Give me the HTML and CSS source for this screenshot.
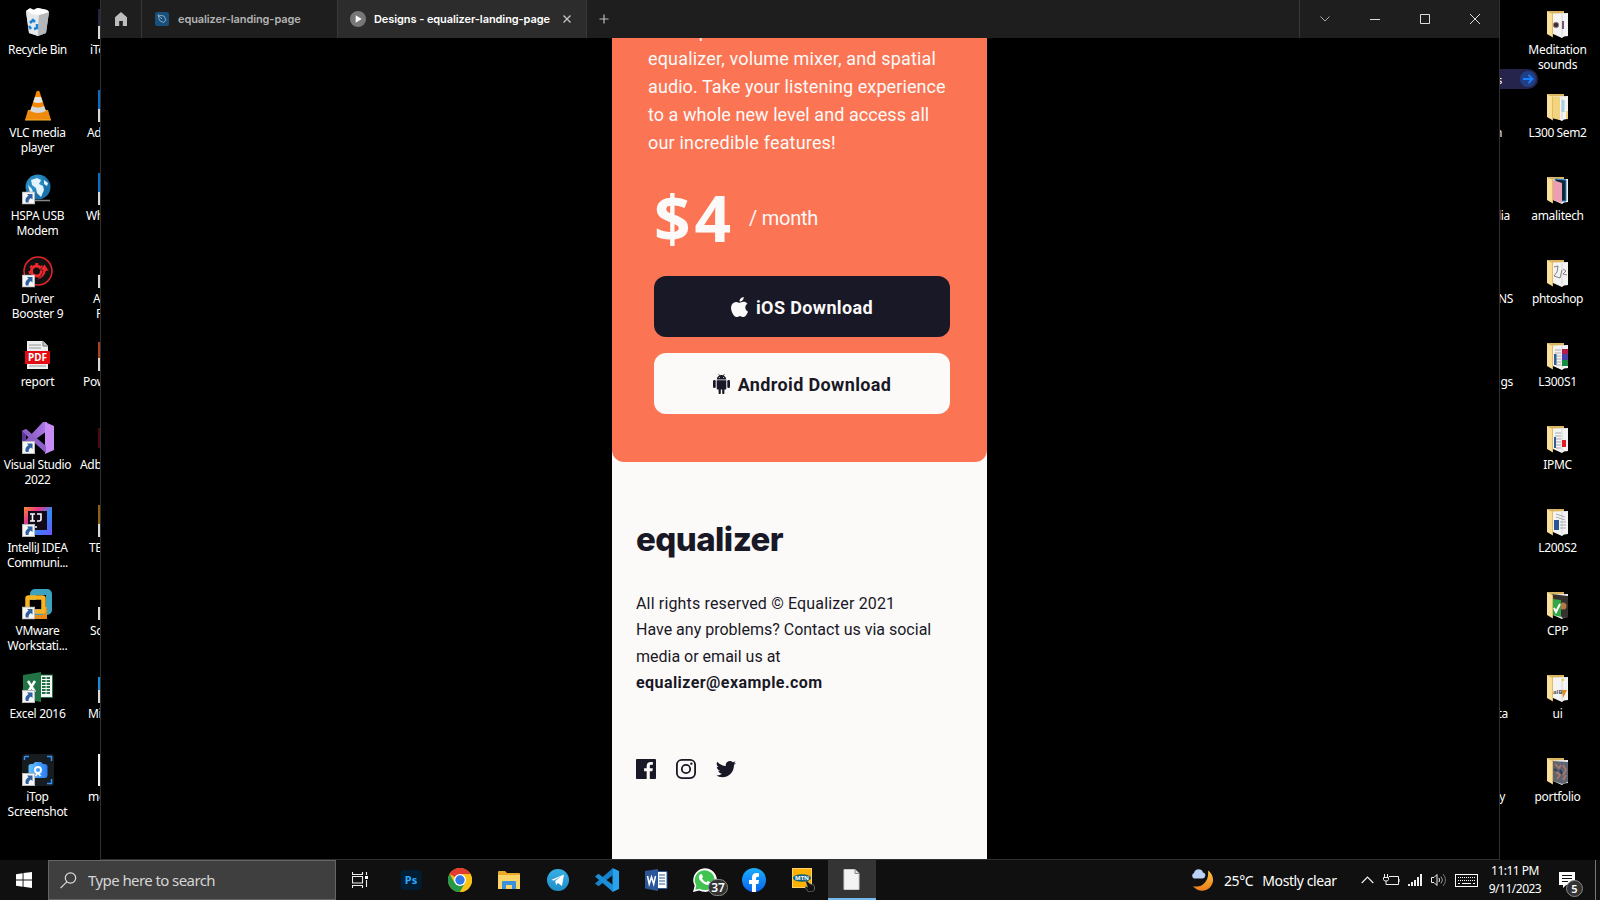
FILE: index.html
```html
<!DOCTYPE html>
<html lang="en">
<head>
<meta charset="utf-8">
<title>Desktop</title>
<link rel="stylesheet" href="styles.css">
</head>
<body>
<svg class="defs" aria-hidden="true">
  <defs>
    <symbol id="shortcut" viewBox="0 0 13 13">
      <rect width="13" height="13" fill="#b9b9b9"/><rect x="1" y="1" width="11" height="11" fill="#f6f6f6"/>
      <path d="M5 2.500h5.500V8L8.800 6.400C7 7.500 6.500 9 6.600 11H4C2.700 8 4 5.500 6.600 4.200z" fill="#2f5f9f"/>
    </symbol>
    <symbol id="folder" viewBox="0 0 21 28">
      <path d="M0 1h17v3h2v20H0z" fill="#d9b55f"/>
      <path d="M6 3.500l15-.5v23l-4 .5-2 1.500-9-4z" fill="#f4f4f4"/>
      <path d="M15 4v22" stroke="#c9c9c9" stroke-width=".7"/>
    </symbol>
    <symbol id="flap" viewBox="0 0 21 28">
      <path d="M0 1.500l6 2.500v23.500L0 24z" fill="#fbe09a"/><path d="M5.500 4v23" stroke="#e3bd66"/>
    </symbol>
    <linearGradient id="ij" x2="1" y2="1"><stop offset="0" stop-color="#ff8a2b"/><stop offset=".3" stop-color="#e8358b"/><stop offset=".55" stop-color="#2f8cf5"/><stop offset="1" stop-color="#6b57ff"/></linearGradient>
    <linearGradient id="vsl" x2="1"><stop offset="0" stop-color="#7c50bb"/><stop offset="1" stop-color="#b07be6"/></linearGradient>
    <radialGradient id="globe" cx=".35" cy=".3"><stop offset="0" stop-color="#1f7fb8"/><stop offset=".5" stop-color="#2d8fc8"/><stop offset="1" stop-color="#1972ad"/></radialGradient>
    <linearGradient id="moon" x2="0" y2="1"><stop offset="0" stop-color="#f9c440"/><stop offset="1" stop-color="#ef7d1a"/></linearGradient>
    <linearGradient id="cam" x2="1"><stop offset="0" stop-color="#63c3ff"/><stop offset="1" stop-color="#2a7cf0"/></linearGradient>
    <linearGradient id="tg" x2="0" y2="1"><stop offset="0" stop-color="#37b0e6"/><stop offset="1" stop-color="#1f8dc8"/></linearGradient>
    <linearGradient id="fb" x2="0" y2="1"><stop offset="0" stop-color="#1aaffc"/><stop offset="1" stop-color="#0863ee"/></linearGradient>
  </defs>
</svg>
<div class="desktop">
  <aside class="side">
    <div class="icons main">
      <div class="item"><svg viewBox="0 0 32 32"><path d="M4 4l3-2 4 1 4-2 5 1 5 1 2 2-3 21-8 3-9-3z" fill="#c9cccf"/><path d="M4 5l13 3-1 21-9-3z" fill="#e6e8ea"/><path d="M17 8l10-3-3 21-8 3z" fill="#b4b8bb"/><path d="M4 4l4-3 4 2 4-2 5 1 4 1 2 2-6 2-5 1-6-1z" fill="#fff"/><path d="M8 16l3-3 2 2M15 17v4l-3 1M9 22l-2-3" fill="none" stroke="#1686dc" stroke-width="2.500"/></svg><p class="tight">Recycle Bin</p></div>
      <div class="item"><svg viewBox="0 0 32 32"><path d="M6 20h20l3 10H3z" fill="#f08a0c"/><path d="M14.500 1.500q1.500-1.500 3 0l6.500 20q-8 5-16 0z" fill="#f48706"/><path d="M13 7h6l1.700 5q-4.500 2-9.400 0z" fill="#e3e5e6"/><path d="M10 16q6 3 12 0l2 5q-8 4-16 0z" fill="#d6d9da"/><path d="M3 30h26" stroke="#ffb52e"/></svg><p>VLC media<br>player</p></div>
      <div class="item"><svg viewBox="0 0 32 32"><path d="M12 27.500h16" stroke="#888" stroke-width="1.500"/><circle cx="16" cy="14" r="12.500" fill="url(#globe)"/><path d="M9 7l6-2 4 2-2 4 4 2 1 4-3 7-4-4-1-5-4-3zM22 7l4 3-1 3-3-2zM6 12l4 4 2 7-4-3z" fill="#e4f4fc"/><use href="#shortcut" y="18.500" width="13" height="13"/></svg><p>HSPA USB<br>Modem</p></div>
      <div class="item"><svg viewBox="0 0 32 32"><circle cx="16" cy="15" r="14" fill="#101010" stroke="#e3262b" stroke-width="1.500"/><circle cx="14.500" cy="15" r="5" fill="none" stroke="#f0292e" stroke-width="3"/><circle cx="14.500" cy="15" r="7" fill="none" stroke="#f0292e" stroke-width="2" stroke-dasharray="3 3.300"/><path d="M14 24q7-4 7-10h-3l4.500-6 4.500 7h-3q-1 7-10 9z" fill="#f0292e" stroke="#101010" stroke-width=".6"/><use href="#shortcut" y="18.500" width="13" height="13"/></svg><p>Driver<br>Booster 9</p></div>
      <div class="item"><svg viewBox="0 0 32 32"><path d="M5 2h16l5 5v23H5z" fill="#eee"/><path d="M21 2v5h5" fill="#ccc" stroke="#777"/><path d="M7 6h12M7 9h12M7 27h17" stroke="#999"/><rect x="3" y="12" width="25" height="13" fill="#e30b13"/><text x="15.500" y="22.300" class="pdf">PDF</text></svg><p>report</p></div>
      <div class="item"><svg viewBox="0 0 32 32"><path d="M0 9l4-2 20 18v6L4 13z" fill="#8052be"/><path d="M0 9l4-2v17l-4-3z" fill="#5d3795"/><path d="M0 22L21 0h4v9L4 24z" fill="url(#vsl)"/><path d="M23 0l9 4v24l-9 4z" fill="#c98bf4"/><path d="M0 9l4-2 20 17v7z" fill="#8d61c8"/><use href="#shortcut" y="19" width="13" height="13"/></svg><p class="tight">Visual Studio<br>2022</p></div>
      <div class="item"><svg viewBox="0 0 32 32"><rect x="2" y="2" width="28" height="28" fill="url(#ij)"/><rect x="6" y="6" width="19" height="19" fill="#120a18"/><path d="M8 9h5M10.500 9v7M8 16h5M15 9h4v5q0 2-2 2h-2M13 22h2" fill="none" stroke="#fff" stroke-width="1.600"/><use href="#shortcut" y="19" width="13" height="13"/></svg><p class="tight">IntelliJ IDEA<br>Communi...</p></div>
      <div class="item"><svg viewBox="0 0 32 32"><rect x="11" y="4" width="16" height="20" rx="2" fill="none" stroke="#3da2c0" stroke-width="6"/><path d="M10 29h13V19" stroke="#e88b19" stroke-width="4" fill="none"/><rect x="5.500" y="9.500" width="16" height="14" rx="1" fill="none" stroke="#f8b324" stroke-width="4.500"/><rect x="8" y="12" width="11" height="9" fill="#000"/><use href="#shortcut" y="18.500" width="13" height="13"/></svg><p>VMware<br>Workstati...</p></div>
      <div class="item"><svg viewBox="0 0 32 32"><rect x="17" y="4" width="13.500" height="22.500" fill="#f7f7f7" stroke="#217346"/><path d="M20 7h8M20 10h8M20 13h8M20 16h8M20 19h8M20 22h8" stroke="#217346" stroke-width="2" stroke-dasharray="3.600 1"/><path d="M1 4l18-3v30L1 28z" fill="#217346"/><path d="M6 10l7 11M13 10L6 21" stroke="#fff" stroke-width="2.500"/><use href="#shortcut" y="19" width="13" height="13"/></svg><p>Excel 2016</p></div>
      <div class="item"><svg viewBox="0 0 32 32"><rect width="32" height="32" rx="3" fill="#171c21"/><path d="M2.500 6V3.500q0-1 1-1H7M25 2.500h4.500V7M29.500 25v4.500H25" fill="none" stroke="#2f93f3" stroke-width="1.500"/><path d="M6.500 12q0-2 3-2h1.500l2-2h6l2 2h1.500q3 0 3 3v8q0 3-3 3H9.500q-3 0-3-3z" fill="url(#cam)"/><circle cx="16" cy="16" r="3" fill="none" stroke="#fff" stroke-width="1.800"/><path d="M13.500 22l2.500-3 2.500 3" stroke="#fff" stroke-width="1.500" fill="none"/><use href="#shortcut" y="19" width="13" height="13"/></svg><p>iTop<br>Screenshot</p></div>
    </div>
    <div class="icons cut">
      <div class="item"><i class="sliver navy"></i><p style="margin-left:15px">iTop</p></div>
      <div class="item"><i class="sliver blue"></i><p style="margin-left:12px">Adobe</p></div>
      <div class="item"><i class="sliver blue"></i><p style="margin-left:11px">What</p></div>
      <div class="item"><i class="sliver"></i><p style="margin-left:18px">A<br><span class="ind">F</span></p></div>
      <div class="item"><i class="sliver rust"></i><p style="margin-left:8px">Power</p></div>
      <div class="item"><i class="sliver maroon"></i><p style="margin-left:5px">Adbe</p></div>
      <div class="item"><i class="sliver gold"></i><p style="margin-left:14px">TEK</p></div>
      <div class="item"><i class="sliver"></i><p style="margin-left:15px">Scr</p></div>
      <div class="item"><i class="sliver azure"></i><p style="margin-left:13px">Mi</p></div>
      <div class="item"><i class="sliver white"></i><p style="margin-left:13px">me</p></div>
    </div>
  </aside>

  <main class="window">
    <header class="titlebar">
      <div class="home"><svg width="12" height="14" viewBox="0 0 12 14"><path d="M6 0l6 5.200V14H7.800V9H4.200v5H0V5.200z" fill="#bdbdbd"/></svg></div>
      <div class="tab first"><svg width="14" height="14" viewBox="0 0 14 14"><rect width="14" height="14" rx="2" fill="#17507c"/><path d="M3 3l6 1 2 4-2.500 2.500-4-2zM3 3l4 4M8 11l3-3" fill="none" stroke="#89a6bb"/></svg><span>equalizer-landing-page</span></div>
      <div class="tab active"><svg width="16" height="16" viewBox="0 0 16 16"><circle cx="8" cy="8" r="8" fill="#777"/><path d="M5.700 4.200l6 3.800-6 3.800z" fill="#fff"/></svg><span>Designs - equalizer-landing-page</span><svg class="x" width="8" height="8" viewBox="0 0 8 8"><path d="M.5.5l7 7M7.500.5l-7 7" stroke="#c6c6c6" stroke-width="1.300"/></svg></div>
      <div class="plus"><svg width="10" height="10" viewBox="0 0 10 10"><path d="M5 .5v9M.5 5h9" stroke="#bbb" stroke-width="1.200"/></svg></div>
      <div class="controls">
        <svg viewBox="0 0 50 38"><path d="M20.500 16.500l4.500 4.500 4.500-4.500" fill="none" stroke="#aaa"/></svg>
        <svg viewBox="0 0 50 38"><path d="M20 19.500h10" stroke="#ddd"/></svg>
        <svg viewBox="0 0 50 38"><path d="M20.500 14.500h9v9h-9z" fill="none" stroke="#ddd"/></svg>
        <svg viewBox="0 0 50 38"><path d="M20 14l10 10M30 14L20 24" stroke="#ddd"/></svg>
      </div>
    </header>
    <div class="phone">
      <section class="card">
        <p class="pitch"><span>Get expert</span><span class="a">equalizer, volume mixer, and spatial</span><span class="b">audio. Take your listening experience</span><span class="c">to a whole new level and access all</span><span class="d">our incredible features!</span></p>
        <div class="price"><strong>$4</strong><span>/ month</span></div>
        <div class="btn dark"><svg width="17" height="20" viewBox="2.200 0 19.500 24" preserveAspectRatio="none"><path fill="#fcfaf9" d="M12.152 6.896c-.948 0-2.415-1.078-3.960-1.040-2.040.027-3.910 1.183-4.961 3.014-2.117 3.675-.546 9.103 1.519 12.090 1.013 1.454 2.208 3.090 3.792 3.039 1.520-.065 2.090-.987 3.935-.987 1.831 0 2.350.987 3.960.948 1.637-.026 2.676-1.480 3.676-2.948 1.156-1.688 1.636-3.325 1.662-3.415-.039-.013-3.182-1.221-3.220-4.857-.026-3.040 2.480-4.494 2.597-4.559-1.429-2.090-3.623-2.324-4.390-2.376-2-.156-3.675 1.090-4.610 1.090zM15.530 3.830c.843-1.012 1.400-2.427 1.245-3.830-1.207.052-2.662.805-3.532 1.818-.780.896-1.454 2.338-1.273 3.714 1.338.104 2.715-.688 3.559-1.701"/></svg><span>iOS Download</span></div>
        <div class="btn light"><svg width="17" height="20" viewBox="0 0 17 20"><g fill="#191826"><path d="M3.700 5.500Q4 2.300 6.300 1.500L5.300.200l.5-.3 1 1.400q1.700-.5 3.400 0l1-1.400.5.300-1 1.300q2.300.8 2.600 4zM3.700 6.300h9.600v8.200q0 1-1 1h-.9V19a1 1 0 0 1-2.200 0v-3.500H7.800V19a1 1 0 0 1-2.200 0v-3.500h-.9q-1 0-1-1z"/><rect y="6" width="2.700" height="8" rx="1.200"/><rect x="14.300" y="6" width="2.700" height="8" rx="1.200"/></g><circle cx="6.300" cy="3.500" r=".5" fill="#fff"/><circle cx="10.700" cy="3.500" r=".5" fill="#fff"/></svg><span>Android Download</span></div>
      </section>
      <footer class="foot">
        <div class="brand">equalizer</div>
        <p class="legal"><span class="e">All rights reserved © Equalizer 2021</span><span>Have any problems? Contact us via social</span><span>media or email us at</span><b>equalizer@example.com</b></p>
        <div class="social">
          <svg viewBox="0 0 20 20"><path fill="#191826" d="M18.896 0H1.104C.494 0 0 .494 0 1.104v17.793C0 19.506.494 20 1.104 20h9.580v-7.745H8.076V9.237h2.606V7.010c0-2.583 1.578-3.990 3.883-3.990 1.104 0 2.052.082 2.329.119v2.700h-1.598c-1.254 0-1.496.597-1.496 1.470v1.928h2.989l-.390 3.018h-2.600V20h5.098c.608 0 1.102-.494 1.102-1.104V1.104C20 .494 19.506 0 18.896 0z"/></svg>
          <svg viewBox="0 0 20 20"><rect x=".9" y=".9" width="18.200" height="18.200" rx="5" fill="none" stroke="#191826" stroke-width="1.800"/><circle cx="10" cy="10" r="4.200" fill="none" stroke="#191826" stroke-width="1.800"/><circle cx="15.340" cy="4.660" r="1.200" fill="#191826"/></svg>
          <svg viewBox="0 -1.700 20 20"><path fill="#191826" d="M20 2.172a8.192 8.192 0 01-2.357.646 4.110 4.110 0 001.805-2.270 8.220 8.220 0 01-2.606.996A4.096 4.096 0 0013.847.248c-2.650 0-4.596 2.472-3.998 5.037A11.648 11.648 0 011.392 1a4.109 4.109 0 001.270 5.478 4.086 4.086 0 01-1.858-.513c-.045 1.900 1.318 3.679 3.291 4.075a4.113 4.113 0 01-1.853.070 4.106 4.106 0 003.833 2.849A8.250 8.250 0 010 14.658a11.616 11.616 0 006.290 1.843c7.618 0 11.922-6.434 11.662-12.205A8.354 8.354 0 0020 2.172z"/></svg>
        </div>
      </footer>
    </div>
  </main>

  <aside class="side right">
    <div class="icons tails">
      <div class="item"><div class="pill"><span>s</span><svg width="16" height="16" viewBox="0 0 16 16"><circle cx="8" cy="8" r="8" fill="#213f86"/><path d="M3 8h9M8.500 4L12.500 8l-4 4" fill="none" stroke="#1b80ff" stroke-width="1.800"/></svg></div></div>
      <div class="item"><p style="width:2px">n</p></div>
      <div class="item"><p style="width:10px">lia</p></div>
      <div class="item"><p style="width:13px">NS</p></div>
      <div class="item"><p style="width:13px">gs</p></div>
      <div class="item"></div><div class="item"></div><div class="item"></div>
      <div class="item"><p style="width:8px">ta</p></div>
      <div class="item"><p style="width:5px">y</p></div>
    </div>
    <div class="icons folders">
      <div class="item"><svg viewBox="0 0 21 28"><use href="#folder"/><circle cx="9" cy="15" r="2.700" fill="#333" stroke="#a57a8c"/><path d="M16 11v8" stroke="#74556d" stroke-width="2"/><use href="#flap"/></svg><p>Meditation<br>sounds</p></div>
      <div class="item"><svg viewBox="0 0 21 28"><use href="#folder"/><path d="M3 3l10 1v23l-9-2zM19 18h2v8h-2z" fill="#f2d37e"/><path d="M16 7v12" stroke="#a9cfe2" stroke-width="3"/><use href="#flap"/></svg><p class="tight">L300 Sem2</p></div>
      <div class="item"><svg viewBox="0 0 21 28"><use href="#folder"/><path d="M8 3l11 1v21h-5z" fill="#10263c" stroke="#2f84c7"/><path d="M6 4l9 3v20l-9-3z" fill="#eaa0b2"/><use href="#flap"/></svg><p>amalitech</p></div>
      <div class="item"><svg viewBox="0 0 21 28"><use href="#folder"/><path d="M7 8l4-1-1 6-3 4 6 2 2-8M16 10l3 2-3 3 4 1" fill="none" stroke="#666" stroke-width=".8"/><use href="#flap"/></svg><p class="tight">phtoshop</p></div>
      <div class="item"><svg viewBox="0 0 21 28"><use href="#folder"/><path d="M8 8h6M8 11h6M8 14h6M8 17h6M9 20h5M9 23h5" stroke="#aaa"/><path d="M7 12h2.500v11H7z" fill="#315d9c"/><path d="M15 7h6v5h-6z" fill="#b51d48"/><path d="M15 12h6v6h-6z" fill="#4942a8"/><path d="M15 18h6v6h-6z" fill="#148b44"/><use href="#flap"/></svg><p>L300S1</p></div>
      <div class="item"><svg viewBox="0 0 21 28"><use href="#folder"/><path d="M8 8h6M8 11h6M8 14h6M8 17h6M9 20h5M9 23h5" stroke="#aaa"/><path d="M7 12h2v11H7z" fill="#315d9c"/><path d="M15 15h4v7h-4z" fill="#e01c2b"/><use href="#flap"/></svg><p>IPMC</p></div>
      <div class="item"><svg viewBox="0 0 21 28"><use href="#folder"/><path d="M9 6l9 3M9 9l9 3M13 14h6M13 17h6M13 20h6" stroke="#aaa"/><path d="M7 12h5v10H7z" fill="#2b579a"/><use href="#flap"/></svg><p>L200S2</p></div>
      <div class="item"><svg viewBox="0 0 21 28"><use href="#folder"/><path d="M4 3l17 2v21l-6 1z" fill="#35312f"/><circle cx="16" cy="15" r="3.500" fill="#b9783f"/><path d="M6 8l8 1v17l-8-2z" fill="#2fa84a"/><path d="M7 17l2 4 4-8" fill="none" stroke="#fff" stroke-width="2"/><use href="#flap"/></svg><p>CPP</p></div>
      <div class="item"><svg viewBox="0 0 21 28"><use href="#folder"/><path d="M15 16h5l-4 8z" fill="#e68a22"/><path d="M15 6h2" stroke="#f6c933" stroke-width="2"/><text x="6" y="20" class="alb">alB</text><use href="#flap"/></svg><p>ui</p></div>
      <div class="item"><svg viewBox="0 0 21 28"><use href="#folder"/><path d="M6 4l15 1v20l-6 2-9-3z" fill="#5f6472"/><path d="M8 7l4 4 2-3M16 8l3 5-3 5M9 15l4 3-3 4M19 18l-3 5" fill="none" stroke="#b07a67" stroke-width="1.600"/><path d="M7 12l3 2M13 13l2 4" stroke="#2c3c5e" stroke-width="2"/><use href="#flap"/></svg><p>portfolio</p></div>
    </div>
  </aside>
</div>

<nav class="taskbar">
  <div class="start"><svg width="16" height="16" viewBox="0 0 16 16"><path d="M0 2.200L6.600 1.300V7.500H0zM7.500 1.100L16 0v7.500H7.500zM0 8.400h6.600v6.300L0 13.800zM7.500 8.400H16V16l-8.500-1.200z" fill="#fff"/></svg></div>
  <div class="search"><svg width="17" height="17" viewBox="0 0 17 17"><circle cx="10.500" cy="6" r="5.200" fill="none" stroke="#ddd" stroke-width="1.200"/><path d="M6.800 9.800L.5 16.200" stroke="#ddd" stroke-width="1.200"/></svg><span>Type here to search</span></div>
  <div class="view"><svg width="16" height="16" viewBox="0 0 16 16"><path d="M.5 0v2.500h10V0M.5 16v-2.500h10V16M.5 4.500h10v6.500H.5zM14.500 0v3M14.500 8v7" fill="none" stroke="#eee" stroke-width="1.100"/><path d="M13 4h3v3h-3z" fill="#fff"/></svg></div>
  <div class="apps">
    <div><svg viewBox="0 0 24 24"><rect x="1.500" y="2" width="21" height="20" rx="3.500" fill="#001d34"/><text x="12" y="15.700" class="ps">Ps</text></svg></div>
    <div><svg viewBox="0 0 24 24"><circle cx="12" cy="12" r="12" fill="#fbc116"/><path d="M12 12L1.600 6A12 12 0 0 1 22.400 6H12z" fill="#e33b2e"/><path d="M1.600 6A12 12 0 0 0 12 24l5.200-9L12 12 6.800 15z" fill="#279847"/><path d="M12 6h10.400A12 12 0 0 1 12 24l5.200-9z" fill="#fbc116"/><circle cx="12" cy="12" r="6" fill="#fff"/><circle cx="12" cy="12" r="4.700" fill="#3079e8"/></svg></div>
    <div><svg viewBox="0 0 24 24"><path d="M1 4q0-1 1-1h6l2 2h12q1 0 1 1v15H1z" fill="#e9aa2a"/><path d="M1 7h22v14H1z" fill="#fbd567"/><path d="M5 21v-7q0-1 1-1h12q1 0 1 1v7h-4v-4H9v4z" fill="#3a92dc"/></svg></div>
    <div><svg viewBox="0 0 24 24"><circle cx="12" cy="12" r="11" fill="url(#tg)"/><path d="M5 12l13-5.500-2 11.500-4-3-2 2-.8-4 5.800-4.500-7 4z" fill="#fff"/></svg></div>
    <div><svg viewBox="0 0 24 24"><path d="M17.500 0L24 3v18l-6.500 3z" fill="#2aa3ee"/><path d="M18 0v7L3.500 18.200 0 15.500z" fill="#1682cb"/><path d="M18 24v-7L3.500 5.800 0 8.500z" fill="#1b8ed8"/></svg></div>
    <div><svg viewBox="0 0 24 24"><path d="M13 3.500h10v17H13z" fill="#fff" stroke="#2b579a"/><path d="M15 7h6M15 10h6M15 13h6M15 16h6" stroke="#2b579a" stroke-width="1.200"/><path d="M1 3l13-2v22L1 20.500z" fill="#2b579a"/><path d="M3.500 8l1.700 8L7.500 9l2.200 7 1.800-8" fill="none" stroke="#fff" stroke-width="1.500"/></svg></div>
    <div class="wa"><svg viewBox="0 0 24 24"><path d="M0 24l1.700-6.200A11.800 11.800 0 1 1 6.300 22.400z" fill="#fff"/><path d="M2.300 21.700l1-4.200a9.900 9.900 0 1 1 3.300 3.200z" fill="#40c351"/><path d="M7 6.500q1-1 2 0l1 2.500-1 1.500q1.500 2.800 4.300 4l1.500-1.500 2.700 1.300q.5 1-1 2.300-2 1.200-5.500-.8-4.500-2.800-5.200-6-.2-2 1.200-3.300z" fill="#fff"/></svg><b>37</b></div>
    <div><svg viewBox="0 0 24 24"><circle cx="12" cy="12" r="12" fill="url(#fb)"/><path d="M10 24v-8H7v-4h3V9.500Q10 5 14.500 5q1.500 0 2.500.3v3.400h-1.500Q14 8.700 14 10.200V12h3l-.6 4H14v8z" fill="#fff"/></svg></div>
    <div><svg viewBox="0 0 24 24"><rect x="1.500" y=".5" width="19" height="19" fill="#ffb100" stroke="#ffd06b"/><ellipse cx="11" cy="10" rx="9" ry="3.800" fill="#11627c"/><text x="11" y="12" class="mtn">MTN</text><path d="M14.500 13q1-.8 2 .3l2 2.200 4 1.300q1.500 1.500 1 5l-2 2h-4l-3.500-4.500q.5-1.300 2-.5l.5.300z" fill="#111" stroke="#999" stroke-width=".6"/></svg></div>
    <div class="on"><svg viewBox="0 0 24 24"><path d="M4 2.500h11l4 4v16H4z" fill="#f3f3f3" stroke="#ccc"/><path d="M15 2.500v4h4" fill="#ddd" stroke="#888"/></svg></div>
  </div>
  <div class="weather"><svg width="24" height="23" viewBox="0 0 24 23"><path d="M17 1.500a11 11 0 1 1-15 15.500q7 2 11.500-3T17 1.500z" fill="url(#moon)"/><path d="M3 9.500a3 3 0 0 1 0-5.500Q4 .300 7.500.300t4.500 3.200q3 1 2.200 3.500-.5 2.500-3 2.500z" fill="#b9d2f6"/></svg><span class="deg">25°C</span><span>Mostly clear</span></div>
  <div class="tray">
    <svg width="13" height="8" viewBox="0 0 13 8"><path d="M.7 7l5.800-5.800L12.300 7" fill="none" stroke="#eee" stroke-width="1.200"/></svg>
    <svg width="17" height="12" viewBox="0 0 17 12"><path d="M6 2.500h9.500v8H6M17 5v3M1.500 0v3M4.500 0v3M.5 3.500h5v2q0 1.500-2.500 1.500T.500 5.500zM3 7v3.500h3" fill="none" stroke="#eee"/></svg>
    <svg width="14" height="12" viewBox="0 0 14 12"><path d="M1 12v-2M4 12V8M7 12V6M10 12V3M13 12V0" stroke="#eee" stroke-width="2"/></svg>
    <svg width="17" height="14" viewBox="0 0 17 14"><path d="M.5 4.500h2.500l3-3v11l-3-3H.500zM8 5q1 2 0 4" fill="none" stroke="#eee"/><path d="M10 3.500q3 3.500 0 7" fill="none" stroke="#999"/><path d="M12 1q5 6 0 12" fill="none" stroke="#777"/></svg>
    <svg width="23" height="13" viewBox="0 0 23 13"><rect x=".5" y=".5" width="22" height="12" fill="none" stroke="#fff"/><path d="M3 3.500h17M3 6.500h17" stroke="#fff" stroke-dasharray="1 1"/><path d="M3 9.500h2M7 9.500h9M18 9.500h2" stroke="#fff"/></svg>
  </div>
  <div class="clock"><span>11:11 PM</span><span>9/11/2023</span></div>
  <div class="note"><svg width="16" height="16" viewBox="0 0 16 16"><path d="M0 0h16v13H7l-3 3v-3H0z" fill="#fff"/><path d="M3 3.500h10M3 6.500h10M3 9.500h6" stroke="#111"/></svg><b>5</b></div>
</nav>
</body>
</html>
```
FILE: styles.css
```css
* { box-sizing: border-box; }
body { margin: 0; width: 1600px; height: 900px; overflow: hidden; background: #000; color: #fff; font-family: "Noto Sans", "Open Sans", sans-serif; display: grid; grid-template-rows: 860px 40px; }
.defs { position: absolute; width: 0; height: 0; }
p { margin: 0; }
svg { display: block; flex: none; }

.desktop { display: grid; grid-template-columns: 100px 1400px 100px; height: 860px; }
.side { display: grid; grid-template-columns: 75px 25px; overflow: hidden; height: 860px; }
.side.right { grid-template-columns: 20px 75px; }
.icons { display: grid; grid-auto-rows: 83px; align-content: start; }
.item { padding-top: 7px; display: flex; flex-direction: column; align-items: center; min-width: 0; }
.item > svg { width: 32px; height: 32px; }
.main .item > svg { margin: 0 0 0 1px; }
.item p { margin-top: 3px; font-size: 12px; line-height: 15px; letter-spacing: -.3px; text-align: center; white-space: nowrap; }
.item .tight { letter-spacing: -.4px; }
.cut .item { align-items: flex-start; overflow: hidden; }
.cut p { text-align: left; }
.ind { padding-left: 3px; }
.sliver { width: 2px; height: 32px; margin-left: 23px; background: linear-gradient(transparent 19px, #d8d8d8 19px); }
.navy { background: linear-gradient(transparent 2px, #25243f 2px 19px, #d8d8d8 19px); }
.blue { background: linear-gradient(#0a6cc4 19px, #d8d8d8 19px); }
.rust { background: linear-gradient(transparent 3px, #a8431f 3px 19px, #d8d8d8 19px); }
.maroon { background: linear-gradient(transparent 6px, #4a0a0c 6px 26px, transparent 26px); }
.gold { background: linear-gradient(#8c6112 19px, #d8d8d8 19px); }
.azure { background: linear-gradient(transparent 6px, #168bd8 6px 19px, #d8d8d8 19px); }
.white { background: #f4f4f4; }
.folders .item > svg { width: 21px; height: 28px; margin: 3px 0 1px; }
.tails .item { align-items: flex-start; position: relative; }
.tails p { margin-top: 35px; display: flex; justify-content: flex-end; }
.pill { position: absolute; top: 69px; left: -10px; width: 48px; height: 20px; background: #25244c; border-radius: 0 10px 10px 0; display: flex; align-items: center; justify-content: space-between; padding: 0 2px 0 7px; font-size: 11px; }

.window { border: 1px solid #303030; border-top: 0; height: 860px; background: #000; display: flex; flex-direction: column; align-items: center; overflow: hidden; }
.titlebar { width: 1398px; height: 38px; flex: none; background: #1e1e1e; display: flex; z-index: 1; font: 600 11px/38px Inter, sans-serif; color: #b3b3b3; }
.home { width: 41px; display: flex; align-items: center; justify-content: center; border-right: 1px solid #383838; }
.tab { display: flex; align-items: center; white-space: nowrap; }
.first { width: 195px; padding-left: 13px; gap: 9px; }
.first span { letter-spacing: -.1px; }
.active { width: 250px; background: #2c2c2c; color: #fff; border: solid #383838; border-width: 0 1px; padding-left: 12px; gap: 8px; }
.active span { letter-spacing: -.08px; }
.active .x { margin-left: 5px; }
.plus { width: 34px; display: flex; align-items: center; justify-content: center; }
.controls { margin: 0 -1px 0 auto; display: flex; border-left: 1px solid #383838; }
.controls svg { width: 50px; height: 38px; }

.phone { width: 375px; height: 821px; flex: none; display: flow-root; background: #fcfaf9; color: #191826; font-family: Roboto, sans-serif; margin-left: -1px; }
.card { height: 424px; display: flow-root; background: #fb7453; border-radius: 0 0 12px 12px; color: #fcfaf9; padding: 0 37px 0 42px; }
.pitch { font-size: 18px; line-height: 28px; margin: -21px 0 0 -6px; white-space: nowrap; }
.pitch span, .legal span, .legal b { display: block; }
.pitch .a { letter-spacing: .17px; }
.pitch .b { letter-spacing: .09px; }
.pitch .c { letter-spacing: .06px; }
.pitch .d { letter-spacing: .18px; }
.price { display: flex; align-items: center; height: 74px; margin-top: 24px; white-space: nowrap; }
.price strong { font: 700 64px/74px "Noto Sans", sans-serif; letter-spacing: 4px; width: 95px; }
.price span { font-size: 20px; letter-spacing: -.25px; }
.btn { height: 61px; border-radius: 12px; display: flex; align-items: center; justify-content: center; gap: 8px; font-size: 18px; font-weight: 700; letter-spacing: .37px; margin-bottom: 16px; white-space: nowrap; }
.btn span { padding-top: 2px; }
.dark { background: #191826; margin-top: 21px; }
.light { background: #fcfaf9; color: #191826; }
.foot { padding: 53px 24px 0; }
.brand { font: 800 33px/48px Inter, sans-serif; letter-spacing: -.55px; }
.legal { margin-top: 28px; font-size: 16px; line-height: 26.300px; white-space: nowrap; }
.legal .e { letter-spacing: .16px; }
.legal b { font-weight: 700; letter-spacing: .43px; }
.social { display: flex; gap: 20px; margin-top: 63px; }
.social svg { width: 20px; height: 20px; }

.taskbar { background: #101010; display: flex; align-items: center; width: 1600px; height: 40px; white-space: nowrap; }
.start { width: 48px; display: flex; justify-content: center; }
.search { width: 288px; height: 40px; background: #3f3f3f; border: 1px solid #656565; display: flex; align-items: center; padding-left: 11px; gap: 11px; font-size: 15px; color: #d5d5d5; letter-spacing: -.58px; }
.view { width: 51px; padding-left: 16px; }
.apps { display: flex; gap: 1px; }
.apps div { width: 48px; height: 40px; display: flex; align-items: center; justify-content: center; }
.apps svg { width: 24px; height: 24px; }
.apps .on { background: #343434; border-bottom: 2px solid #76b9ed; }
.wa { position: relative; }
.wa b { position: absolute; left: 27px; top: 19px; width: 20px; height: 17px; border: 1px solid #888; border-radius: 9px; background: #333; font-size: 12px; line-height: 15px; text-align: center; font-weight: 600; }
.weather { margin-left: 315px; display: flex; align-items: center; font-size: 14px; letter-spacing: -.4px; }
.weather .deg { margin: 0 9px; }
.tray { position: absolute; left: 1361px; display: flex; align-items: center; gap: 8.500px; }
.tray svg:nth-child(5) { margin-left: -1px; }
.clock { position: absolute; left: 1485px; width: 60px; display: flex; flex-direction: column; font-size: 12px; line-height: 18px; text-align: center; letter-spacing: -.5px; }
.note { position: absolute; left: 1559px; width: 37px; height: 40px; padding-top: 12px; border-right: 1px solid #777; }
.note b { position: absolute; left: 7px; top: 20px; width: 17px; height: 17px; border-radius: 50%; border: 1px solid #888; background: #333; font-size: 11px; line-height: 15px; text-align: center; font-weight: 600; }
.pdf { font: 700 10px "Noto Sans", sans-serif; fill: #fff; text-anchor: middle; }
.ps { font: 700 11px "Noto Sans", sans-serif; fill: #31a8ff; text-anchor: middle; }
.mtn { font: 700 6px "Noto Sans", sans-serif; fill: #fff; text-anchor: middle; }
.alb { font: 700 6px "Noto Sans", sans-serif; fill: #555; }
```
